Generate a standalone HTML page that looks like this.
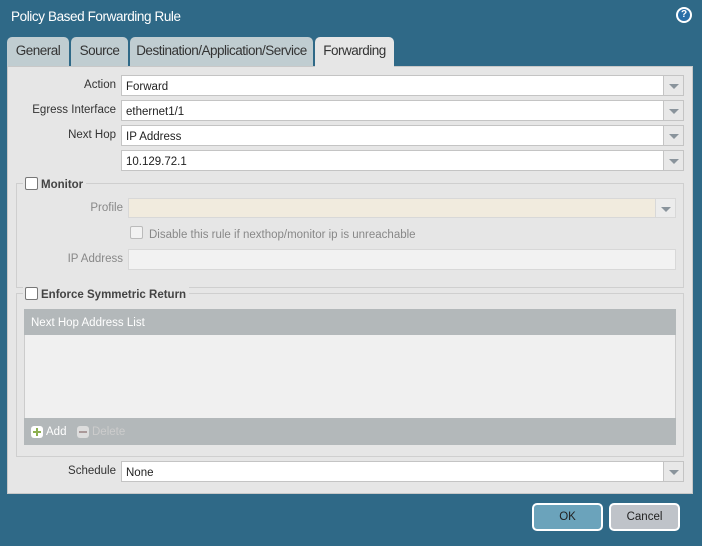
<!DOCTYPE html>
<html><head><style>
*{box-sizing:border-box;margin:0;padding:0}
body{width:702px;height:546px;background:#2f6987;font-family:"Liberation Sans",sans-serif;font-size:11.5px;color:#222;position:relative;overflow:hidden}
.a{position:absolute}
.title{left:11px;top:9px;color:#fff;font-family:"Liberation Sans",sans-serif;font-size:13.5px;letter-spacing:-.4px}
.help{left:676px;top:7px;width:16px;height:16px;border-radius:50%;background:#fff;}
.help span{position:absolute;left:2px;top:2px;width:12px;height:12px;border-radius:50%;background:#2a6fa8;color:#fff;font:bold 10px "Liberation Sans",sans-serif;text-align:center;line-height:12px}
.tab{top:37px;height:30px;background:#c0cdd1;border-radius:5px 5px 0 0;font-family:"Liberation Sans",sans-serif;font-size:13.5px;color:#333;text-align:center;line-height:28px;letter-spacing:-.5px}
.panel{left:7px;top:66px;width:686px;height:428px;background:#e6e6e6;border:1px solid #c8c8c8}
.lbl{text-align:right;width:110px;color:#333}
.in{background:#fff;border:1px solid #c4c4c4;height:21px;padding:5px 4px 0}
.dd{width:21px;height:21px;border:1px solid #c4c4c4;background:#e8e8e8}
.dd:after{content:"";position:absolute;left:5px;top:8px;border-left:5px solid transparent;border-right:5px solid transparent;border-top:5px solid #8a949c}
.fs{border:1px solid #cfcfcf}
.cb{width:13px;height:13px;border:1px solid #777;border-radius:2px;background:#fff}
.leg{font-weight:bold;color:#444;background:#e6e6e6;padding:0 3px}
.btn{top:503px;height:28px;border:2px solid #fff;border-radius:5px;text-align:center;line-height:25px;color:#222}
</style></head><body>
<div class="a title">Policy Based Forwarding Rule</div>
<div class="a help"><span>?</span></div>
<div class="a tab" style="left:7px;width:62px">General</div>
<div class="a tab" style="left:71px;width:57px">Source</div>
<div class="a tab" style="left:130px;width:183px">Destination/Application/Service</div>
<div class="a panel"></div>
<div class="a tab" style="left:315px;width:79px;height:31px;background:#e6e6e6">Forwarding</div>

<div class="a lbl" style="left:6px;top:79px">Action</div>
<div class="a in" style="left:121px;top:75px;width:543px">Forward</div><div class="a dd" style="left:663px;top:75px"></div>
<div class="a lbl" style="left:6px;top:104px">Egress Interface</div>
<div class="a in" style="left:121px;top:100px;width:543px">ethernet1/1</div><div class="a dd" style="left:663px;top:100px"></div>
<div class="a lbl" style="left:6px;top:129px">Next Hop</div>
<div class="a in" style="left:121px;top:125px;width:543px">IP Address</div><div class="a dd" style="left:663px;top:125px"></div>
<div class="a in" style="left:121px;top:150px;width:543px">10.129.72.1</div><div class="a dd" style="left:663px;top:150px"></div>

<div class="a fs" style="left:16px;top:183px;width:668px;height:105px"></div>
<div class="a leg" style="left:23px;top:177px;padding-left:2px"><span class="cb" style="display:inline-block;vertical-align:-2px;margin-right:3px"></span>Monitor</div>
<div class="a lbl" style="left:13px;top:202px;color:#888">Profile</div>
<div class="a in" style="left:128px;top:198px;width:528px;height:20px;background:#f1ebde;border-color:#d8d8d8"></div><div class="a dd" style="left:655px;top:198px;height:20px;border-color:#d8d8d8;background:#ececec"></div>
<div class="a cb" style="left:130px;top:226px;border-color:#bbb;background:#f2f2f2"></div>
<div class="a" style="left:149px;top:229px;color:#888">Disable this rule if nexthop/monitor ip is unreachable</div>
<div class="a lbl" style="left:13px;top:253px;color:#888">IP Address</div>
<div class="a in" style="left:128px;top:249px;width:548px;height:21px;background:#f2f2f2;border-color:#d8d8d8"></div>

<div class="a fs" style="left:16px;top:293px;width:668px;height:164px"></div>
<div class="a leg" style="left:23px;top:287px;padding-left:2px"><span class="cb" style="display:inline-block;vertical-align:-2px;margin-right:3px"></span>Enforce Symmetric Return</div>
<div class="a" style="left:24px;top:309px;width:652px;height:136px;background:#f0f0f0;border:1px solid #ccc"></div>
<div class="a" style="left:24px;top:309px;width:652px;height:26px;background:#b3b8ba;color:#fff;padding:8px 7px">Next Hop Address List</div>
<div class="a" style="left:24px;top:418px;width:652px;height:27px;background:#b3b8ba"></div>
<div class="a" style="left:31px;top:426px;width:12px;height:12px;border-radius:3px;background:#fff"><div class="a" style="left:2px;top:5px;width:8px;height:2px;background:#8db050"></div><div class="a" style="left:5px;top:2px;width:2px;height:8px;background:#8db050"></div></div>
<div class="a" style="left:46px;top:426px;color:#fff">Add</div>
<div class="a" style="left:77px;top:426px;width:12px;height:12px;border-radius:3px;background:#ddd"><div class="a" style="left:2px;top:5px;width:8px;height:2px;background:#a99"></div></div>
<div class="a" style="left:92px;top:426px;color:#ccc">Delete</div>

<div class="a lbl" style="left:6px;top:465px">Schedule</div>
<div class="a in" style="left:121px;top:461px;width:543px">None</div><div class="a dd" style="left:663px;top:461px"></div>

<div class="a btn" style="left:532px;width:71px;background:#6ba3bb">OK</div>
<div class="a btn" style="left:609px;width:71px;background:#bfc3c9">Cancel</div>
</body></html>
